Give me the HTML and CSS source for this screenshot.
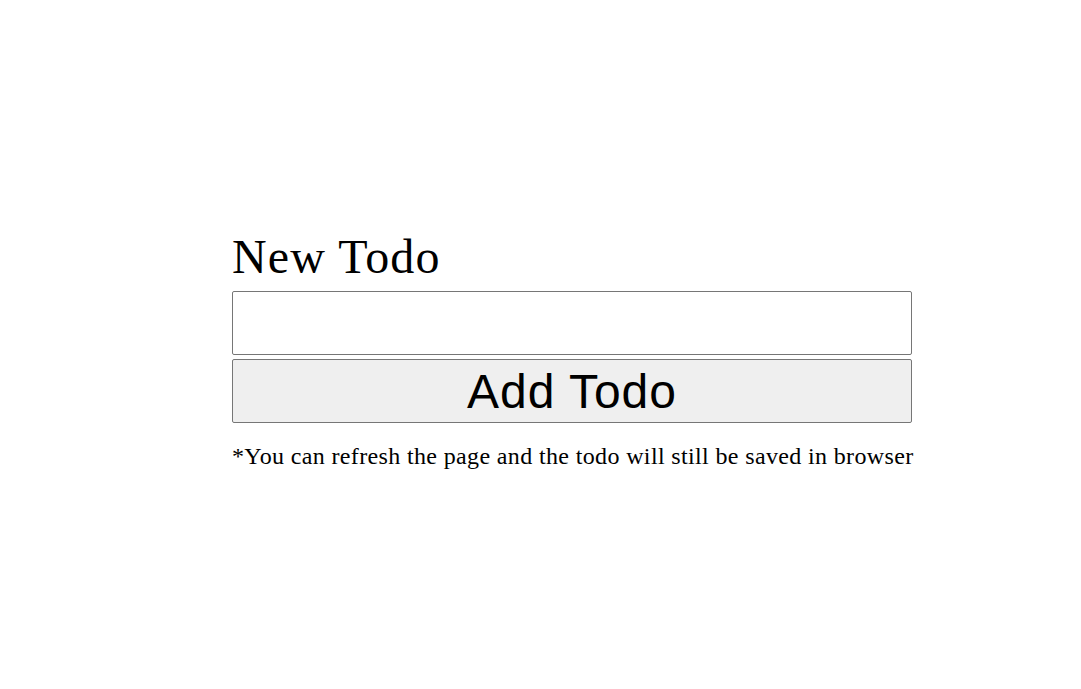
FILE: index.html
```html
<!DOCTYPE html>
<html>
<head>
<meta charset="utf-8">
<link rel="stylesheet" href="styles.css">
</head>
<body>
<main class="page">
  <form class="todo-form">
    <label class="todo-label" for="todo">New Todo</label>
    <input class="todo-input" id="todo" type="text">
    <button class="todo-button" type="button">Add Todo</button>
    <p class="todo-note">*You can refresh the page and the todo will still be saved in browser</p>
  </form>
</main>
</body>
</html>
```
FILE: styles.css
```css
html, body {
  margin: 0;
  padding: 0;
  background: #ffffff;
}
.page {
  padding: 232px 0 0 232px;
  font-family: "Liberation Serif", "Times New Roman", serif;
  color: #000;
}
.todo-form {
  display: flex;
  flex-direction: column;
  width: 680px;
}
.todo-label {
  font-size: 48px;
  line-height: 49px;
  height: 49px;
  margin-bottom: 10px;
  letter-spacing: 1.1px;
}
.todo-input {
  box-sizing: border-box;
  width: 680px;
  height: 64px;
  margin: 0;
  border: 1px solid #767676;
  border-radius: 2px;
  background: #fff;
  font-size: 24px;
}
.todo-button {
  box-sizing: border-box;
  width: 680px;
  height: 64px;
  margin: 4px 0 0 0;
  padding: 0;
  border: 1px solid #767676;
  border-radius: 2px;
  background: #efefef;
  font-family: "Liberation Sans", Arial, sans-serif;
  font-size: 48px;
  line-height: 55px;
  letter-spacing: 1px;
  color: #000;
}
.todo-note {
  margin: 19px 0 0 0;
  font-size: 24px;
  line-height: 28px;
  letter-spacing: 0.36px;
  white-space: nowrap;
}
```
